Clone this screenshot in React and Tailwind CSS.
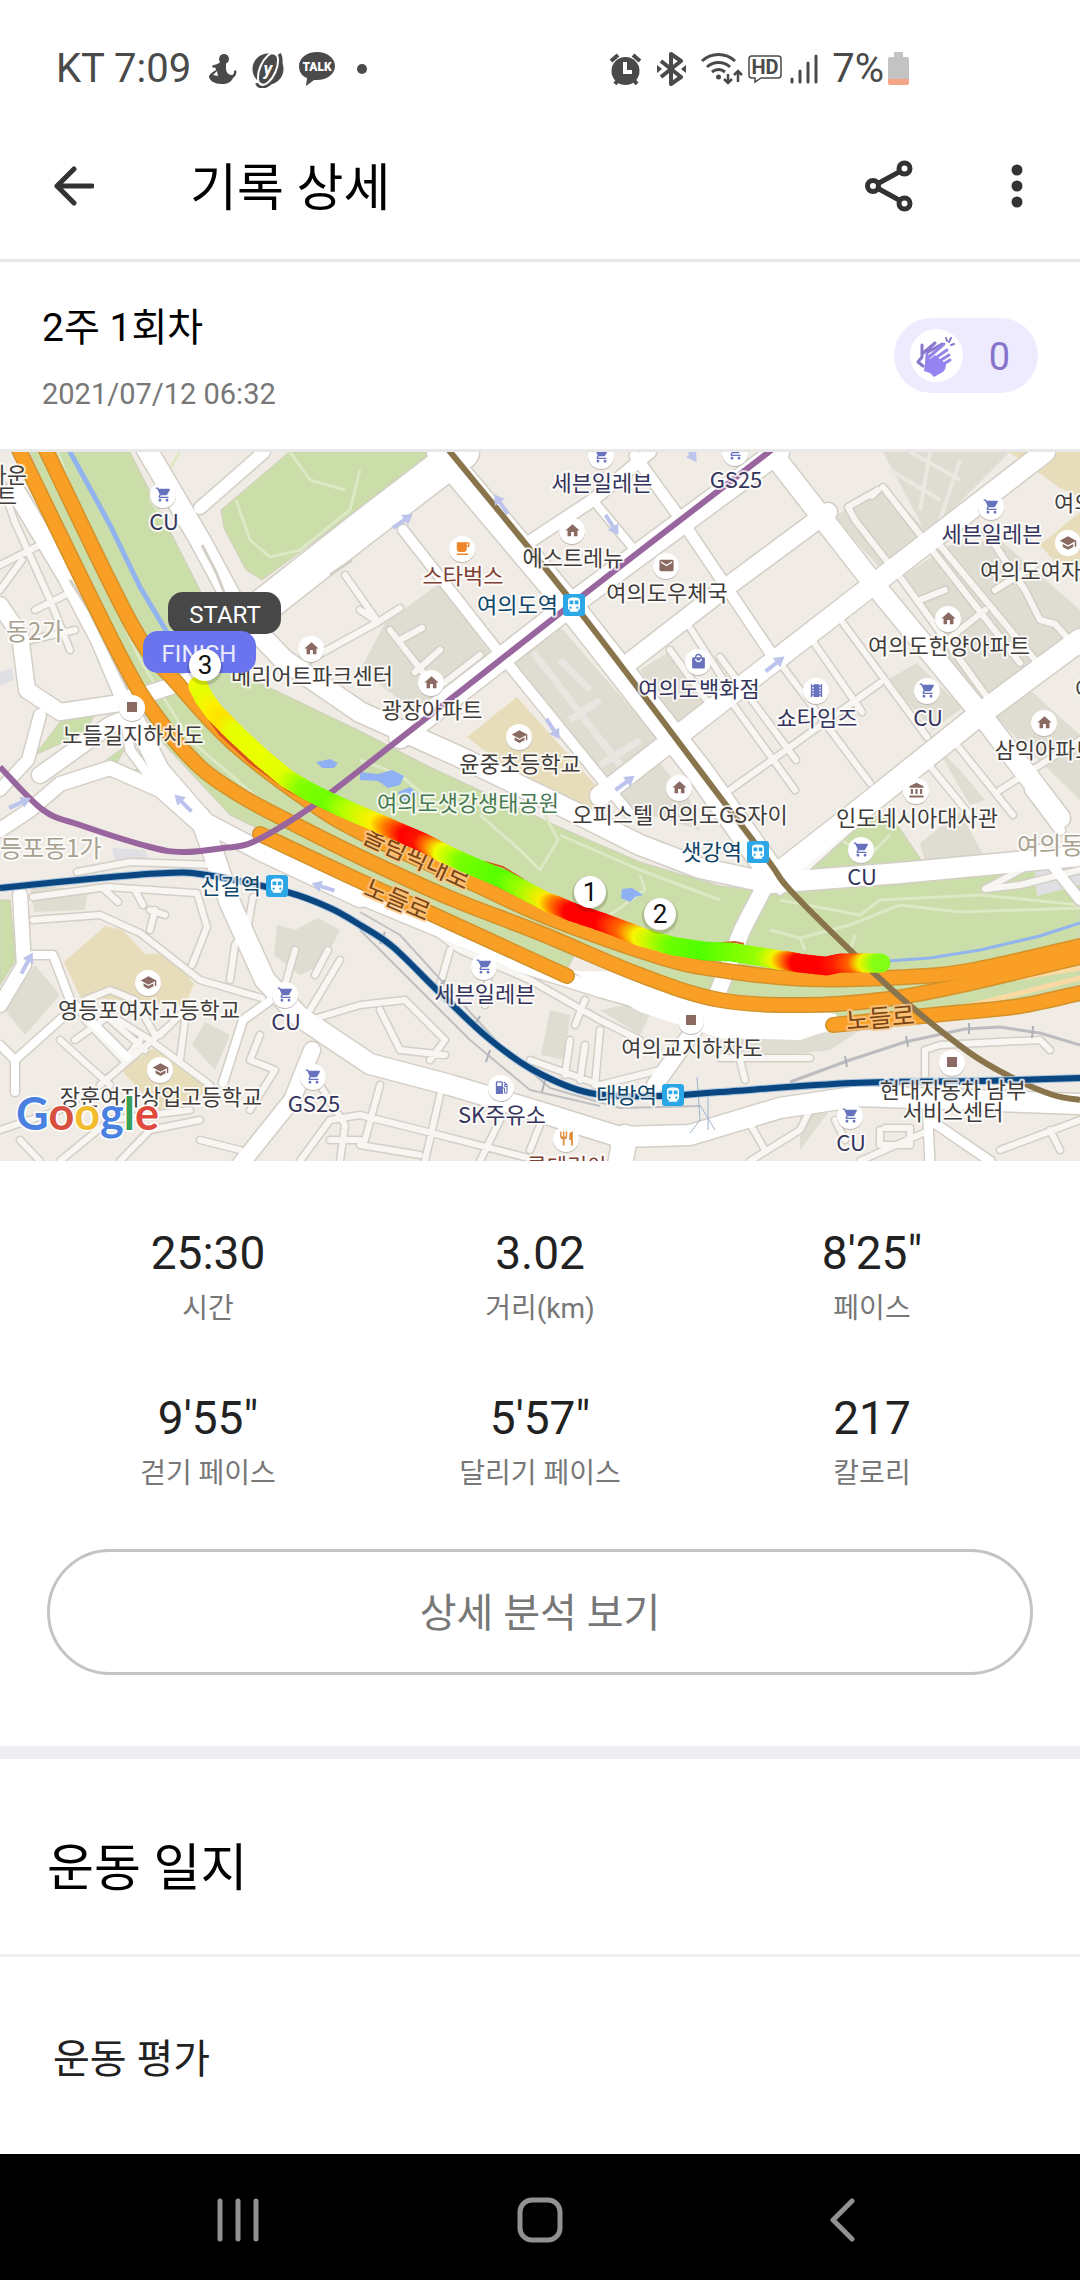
import {
  MdAccountBalance,
  MdDirectionsTransit,
  MdEmail,
  MdHome,
  MdLocalCafe,
  MdLocalGasStation,
  MdLocalMall,
  MdRestaurant,
  MdSchool,
  MdShoppingCart,
  MdTheaters,
} from "react-icons/md";

const stats = [
  { value: "25:30", label: "시간" },
  { value: "3.02", label: "거리(km)" },
  { value: "8'25\"", label: "페이스" },
  { value: "9'55\"", label: "걷기 페이스" },
  { value: "5'57\"", label: "달리기 페이스" },
  { value: "217", label: "칼로리" },
];

// ---- map data, all in map units ----

const parks = [
  "M30 452 130 452 200 590 222 650 262 684 360 731 430 767 557 826 640 862 720 886 780 893 950 879 1080 858 1080 985 960 1012 800 1018 720 996 640 972 578 948 566 972 360 878 230 815 160 740 100 640Z",
  "M221 510 289 452 433 452 360 508 262 580 246 570 224 528Z",
  "M795 872 858 820 890 814 922 861 850 866Z",
  "M35 755 60 722 97 711 84 733Z",
  "M95 768 127 745 112 772Z",
  "M127 773 143 767 162 800Z",
  "M0 900 10 900 16 960 0 985Z",
];

const blocks = [
  "M385 623 440 583 493 657 423 717 360 670Z",
  "M557 623 663 745 607 787 510 667Z",
  "M640 670 667 653 710 710 676 737 666 710Z",
  "M655 757 690 800 700 830 640 812 612 796Z",
  "M883 452 1010 452 927 535Z",
  "M833 517 885 487 935 540 885 573Z",
  "M904 575 950 545 1000 540 1080 610 1080 632 1020 675 985 715 960 680Z",
  "M887 680 917 663 962 708 933 730Z",
  "M990 712 1030 690 1080 735 1080 800Z",
  "M920 843 960 812 985 858 925 862Z",
  "M935 745 960 770 985 800 970 805Z",
  "M277 925 295 930 318 918 340 930 322 965 300 975 274 955Z",
  "M550 1010 570 1015 565 1060 541 1055Z",
  "M600 1010 625 1005 650 1015 640 1035Z",
  "M192 1045 205 1022 230 1035 215 1070Z",
  "M30 885 88 890 85 910 34 912Z",
  "M720 1040 860 1030 830 1050 720 1062Z",
  "M5 1010 35 965 60 995 25 1035Z",
  "M800 1150 830 1110 800 1110Z",
];

const schools = [
  "M467 737 517 697 597 787 590 825 560 810Z",
  "M1009 452 1080 452 1080 497 1060 488Z",
  "M1040 545 1080 512 1080 565 1055 562Z",
  "M64 962 105 926 123 930 145 954 170 954 194 984 185 1005 80 997Z",
  "M121 1070 155 1047 213 1088 165 1117Z",
  "M455 933 475 940 465 953 452 946Z",
];

const minorRoads = [
  "M783 667 870 783",
  "M843 623 927 737",
  "M812 640 862 712",
  "M900 577 987 697",
  "M883 487 1020 663",
  "M933 537 1045 672",
  "M985 530 1025 590 1040 620 1055 624 1080 652",
  "M720 657 796 760",
  "M720 797 880 683",
  "M730 700 795 790",
  "M920 600 945 590M935 650 985 610",
  "M878 490 848 507 855 520 890 565",
  "M878 490 872 496",
  "M953 740 1013 815",
  "M925 760 970 815",
  "M1000 790 1080 740",
  "M995 590 1035 565",
  "M685 620 730 690 690 720",
  "M670 650 710 705",
  "M345 575 378 622 300 665",
  "M360 610 378 622 400 608",
  "M390 630 425 675",
  "M422 628 400 640M440 650 415 672M480 655 435 690",
  "M0 565 40 545M14 520 50 600 70 650M0 480 16 525M35 610 65 595M30 640 75 630M0 590 22 560",
  "M33 920 100 915 140 933 200 980 262 998",
  "M77 872 130 862 215 865",
  "M33 897 107 887 195 893",
  "M105 890 118 902M135 890 143 905",
  "M197 893 207 927 192 965",
  "M253 897 248 925 235 945 230 980",
  "M155 910 150 930M150 910 165 915",
  "M85 1000 110 990 135 1000 155 1035",
  "M75 1040 110 1015 150 1040 210 1085",
  "M60 1040 110 1085M85 1020 125 1062M105 1015 145 1050M100 1085 170 1025M125 1060 140 1040",
  "M185 1020 180 1060M160 1035 190 1005",
  "M260 1035 250 1060 275 1070 250 1110",
  "M295 950 285 985M340 960 325 985 310 1010",
  "M328 950 315 975",
  "M310 1020 360 1005",
  "M0 1130 60 1110 90 1090M60 1161 110 1120 190 1110",
  "M120 1161 150 1130 200 1120M20 1140 40 1161",
  "M200 1140 240 1150M300 1161 330 1120 360 1115",
  "M320 1085 345 1125 340 1161M330 1140 360 1140",
  "M360 1005 405 1000 445 1040 430 1060",
  "M380 1010 400 1050 445 1055",
  "M400 905 460 950 530 980 600 1020 640 1040",
  "M450 950 440 985M490 965 485 1005M585 1000 575 1025",
  "M360 1115 420 1130 540 1161M380 1085 365 1140M440 1095 425 1161M500 1120 480 1161M360 1145 420 1155M540 1125 530 1150",
  "M570 1040 565 1075M585 1045 580 1080M600 1030 595 1085M530 1060 600 1085 660 1070",
  "M740 1060 745 1080M720 1058 810 1058",
  "M925 1075 925 1050 940 1045 1040 1040 1050 1050",
  "M745 1115 765 1150M810 1110 800 1130 750 1161",
  "M835 1120 845 1140M880 1130 880 1145 910 1145 910 1128 885 1128",
  "M1000 1150 1080 1120M860 1161 930 1130M1060 1150 1050 1130",
  "M780 892 860 820",
  "M985 889 1020 885 1080 870M985 889 1030 865",
];

const mainRoads = [
  { d: "M0 605 20 635 27 690 60 712 120 703 190 680", w: 16 },
  { d: "M15 490 67 577 100 640 128 706 160 770 205 822 262 852 360 898", w: 18 },
  { d: "M40 775 110 725 135 715", w: 16 },
  { d: "M0 830 30 810 60 784 110 768 160 790 205 830", w: 14 },
  { d: "M125 715 130 750 160 790", w: 9 },
  { d: "M40 715 28 760 0 790", w: 12 },
  { d: "M350 893 440 930 520 965 600 990 700 1018 830 1020", w: 14 },
  { d: "M200 508 264 452", w: 12 },
  { d: "M262 607 360 530 462 452", w: 34 },
  { d: "M403 530 505 660 628 812", w: 10 },
  { d: "M440 452 573 610 700 772 768 868", w: 26 },
  { d: "M778 452 573 603 400 737", w: 22 },
  { d: "M520 548 593 500 650 452", w: 12 },
  { d: "M593 500 637 553", w: 8 },
  { d: "M635 456 680 518 770 652", w: 11 },
  { d: "M622 668 720 592 828 512", w: 18 },
  { d: "M600 796 720 703 870 587 1045 452", w: 20 },
  { d: "M768 448 873 583 980 713 1060 818", w: 20 },
  { d: "M770 880 860 810 975 718 1080 640", w: 22 },
  { d: "M1030 790 1060 830M1040 850 1080 900", w: 10 },
  { d: "M146 448 200 540 240 614 284 660 360 712 460 757 560 805 640 845 700 868 770 883 900 873 1080 856", w: 20 },
  { d: "M768 880 742 930 715 1000 655 1085", w: 16 },
  { d: "M200 817 214 855 230 903 265 980 300 1017 370 1064 450 1085 540 1112 620 1137 690 1135 780 1108 860 1096 1080 1104", w: 20 },
  { d: "M20 895 24 965 0 1005", w: 14 },
  { d: "M33 955 53 955 70 1000 127 1057", w: 8 },
  { d: "M0 1045 15 1060 62 1018M15 1060 15 1092", w: 8 },
  { d: "M268 1002 243 1020 223 1083", w: 8 },
  { d: "M312 1050 292 1100 240 1165", w: 16 },
  { d: "M620 1165 625 1137", w: 24 },
  { d: "M927 1100 930 1165M930 1120 990 1161", w: 9 },
];

const parkPaths = [
  "M58 452 95 560 140 660 190 740 260 800",
  "M180 452 150 500 165 520",
  "M236 500 250 540 270 557 300 550 350 510 360 470M290 452 310 480 345 490",
  "M480 815 520 850 540 870 558 840 545 815",
  "M360 760 400 775 430 800",
  "M560 835 640 870 720 900M640 875 645 890 610 915",
  "M780 900 860 915 880 900 980 895 1080 905",
  "M770 930 800 938 850 925 900 905 960 912 1080 908",
  "M800 938 805 950M855 935 850 950",
  "M810 850 840 840 870 855 890 835",
];

// turns a list of points into a curve that runs through all of them
function smooth(list) {
  const n = list.split(" ").map(Number);
  const pts = [];
  for (let i = 0; i < n.length; i += 2) pts.push([n[i], n[i + 1]]);
  let d = `M${pts[0].join(" ")}`;
  for (let i = 0; i < pts.length - 1; i++) {
    const a = pts[i - 1] || pts[i];
    const b = pts[i];
    const c = pts[i + 1];
    const e = pts[i + 2] || c;
    d += `C${b[0] + (c[0] - a[0]) / 6} ${b[1] + (c[1] - a[1]) / 6} ${c[0] - (e[0] - b[0]) / 6} ${c[1] - (e[1] - b[1]) / 6} ${c[0]} ${c[1]}`;
  }
  return d;
}

const highways = [
  "18 448 117 650 157 717 200 767 243 797 290 822 360 857 450 898 540 933 640 975 720 1000 803 1005 880 1000 953 987 1080 957",
  "45 448 133 627 177 683 233 743 307 800 360 832 470 882 547 917 660 957 720 970 807 979 907 977 973 970 1080 946",
  "260 834 360 881 567 976",
  "833 1025 953 1013 1020 1006 1080 993",
].map(smooth);

const blueLine = smooth(
  "0 888 100 878 167 873 207 875 287 892 330 908 360 925 393 947 437 990 487 1037 533 1070 590 1093 660 1096 720 1092 853 1083 980 1081 1080 1078"
);
const purpleLine = smooth(
  "774 448 573 603 360 770 307 810 253 842 223 848 183 852 150 847 80 825 43 810 0 767"
);
const brownLine = smooth(
  "447 448 573 603 720 797 770 863 790 890 853 953 907 1003 970 1053 1013 1078 1053 1095 1080 1100"
);

const arrows = [
  [403, 521, -35],
  [501, 504, -125],
  [612, 525, 57],
  [553, 729, 57],
  [625, 783, -37],
  [775, 664, -38],
  [183, 803, -135],
  [20, 803, -25],
  [323, 887, -162],
  [27, 963, -62],
  [690, 452, 57],
];

// x, y and pace color of each point of the run
const track = [
  [197, 684, 245, 255, 0],
  [204, 698, 225, 255, 0],
  [214, 712, 255, 240, 0],
  [224, 722, 255, 225, 0],
  [236, 734, 230, 255, 0],
  [262, 758, 235, 255, 0],
  [286, 778, 225, 255, 0],
  [306, 790, 130, 255, 0],
  [330, 802, 110, 255, 0],
  [352, 812, 190, 255, 0],
  [378, 823, 255, 240, 0],
  [392, 829, 255, 120, 0],
  [408, 836, 255, 0, 0],
  [422, 842, 255, 20, 0],
  [432, 847, 255, 120, 0],
  [443, 853, 240, 255, 0],
  [465, 863, 120, 255, 0],
  [503, 879, 85, 255, 0],
  [522, 889, 150, 255, 0],
  [547, 902, 255, 235, 0],
  [558, 906, 255, 120, 0],
  [572, 912, 255, 0, 0],
  [602, 922, 255, 0, 0],
  [626, 931, 255, 110, 0],
  [641, 937, 245, 245, 0],
  [673, 946, 110, 255, 0],
  [705, 951, 80, 255, 0],
  [730, 952, 110, 255, 0],
  [763, 957, 150, 255, 0],
  [779, 960, 245, 245, 0],
  [789, 961, 255, 120, 0],
  [799, 963, 255, 0, 0],
  [826, 966, 255, 0, 0],
  [840, 963, 255, 30, 0],
  [856, 963, 255, 100, 0],
  [867, 963, 240, 245, 0],
  [881, 963, 130, 255, 20],
];

const trackDots = track.slice(1).flatMap(([x, y, r, g, b], i) => {
  const p = track[i];
  const steps = 8;
  return Array.from({ length: steps }, (_, s) => {
    const t = (s + 1) / steps;
    const mix = (from, to) => Math.round(from + (to - from) * t);
    return {
      x: p[0] + (x - p[0]) * t,
      y: p[1] + (y - p[1]) * t,
      color: `rgb(${mix(p[2], r)},${mix(p[3], g)},${mix(p[4], b)})`,
    };
  });
});

const NAVY = "#34345c";
const INK = "#3f3c3a";
const BROWN = "#8a6a62";
const INDIGO = "#6672bd";

const places = [
  { x: 164, y: 530, text: "CU", icon: MdShoppingCart, color: NAVY, tint: INDIGO },
  { x: 602, y: 491, text: "세븐일레븐", icon: MdShoppingCart, color: NAVY, tint: INDIGO },
  { x: 736, y: 488, text: "GS25", icon: MdShoppingCart, color: NAVY, tint: INDIGO },
  { x: 573, y: 566, text: "에스트레뉴", icon: MdHome, color: INK, tint: BROWN },
  { x: 463, y: 584, text: "스타벅스", icon: MdLocalCafe, color: "#7c4034", tint: "#ee8427" },
  { x: 667, y: 601, text: "여의도우체국", icon: MdEmail, color: INK, tint: BROWN },
  { x: 312, y: 684, text: "메리어트파크센터", icon: MdHome, color: INK, tint: BROWN },
  { x: 432, y: 718, text: "광장아파트", icon: MdHome, color: INK, tint: BROWN },
  { x: 520, y: 772, text: "윤중초등학교", icon: MdSchool, color: INK, tint: BROWN },
  { x: 680, y: 823, text: "오피스텔 여의도GS자이", icon: MdHome, color: INK, tint: BROWN },
  { x: 699, y: 697, text: "여의도백화점", icon: MdLocalMall, color: NAVY, tint: INDIGO },
  { x: 992, y: 542, text: "세븐일레븐", icon: MdShoppingCart, color: NAVY, tint: INDIGO },
  { x: 949, y: 654, text: "여의도한양아파트", icon: MdHome, color: INK, tint: BROWN },
  { x: 817, y: 726, text: "쇼타임즈", icon: MdTheaters, color: NAVY, tint: INDIGO },
  { x: 928, y: 726, text: "CU", icon: MdShoppingCart, color: NAVY, tint: INDIGO },
  { x: 1045, y: 758, text: "삼익아파트", icon: MdHome, color: INK, tint: BROWN },
  { x: 917, y: 826, text: "인도네시아대사관", icon: MdAccountBalance, color: INK, tint: BROWN },
  { x: 862, y: 885, text: "CU", icon: MdShoppingCart, color: NAVY, tint: INDIGO },
  { x: 133, y: 743, text: "노들길지하차도", color: INK, tint: BROWN },
  { x: 149, y: 1018, text: "영등포여자고등학교", icon: MdSchool, color: INK, tint: BROWN },
  { x: 286, y: 1030, text: "CU", icon: MdShoppingCart, color: NAVY, tint: INDIGO },
  { x: 161, y: 1105, text: "장훈여자상업고등학교", icon: MdSchool, color: INK, tint: BROWN },
  { x: 314, y: 1112, text: "GS25", icon: MdShoppingCart, color: NAVY, tint: INDIGO },
  { x: 485, y: 1002, text: "세븐일레븐", icon: MdShoppingCart, color: NAVY, tint: INDIGO },
  { x: 502, y: 1123, text: "SK주유소", icon: MdLocalGasStation, color: NAVY, tint: INDIGO },
  { x: 692, y: 1056, text: "여의교지하차도", color: INK, tint: BROWN },
  { x: 953, y: 1098, text: "현대자동차 남부", color: INK, tint: BROWN },
  { x: 851, y: 1151, text: "CU", icon: MdShoppingCart, color: NAVY, tint: INDIGO },
  { x: 567, y: 1174, text: "롯데리아", icon: MdRestaurant, color: "#7c4034", tint: "#e08a3c" },
];

const stations = [
  { x: 574, y: 605, label: "여의도역" },
  { x: 758, y: 852, label: "샛강역" },
  { x: 277, y: 886, label: "신길역" },
  { x: 673, y: 1095, label: "대방역" },
];

const mapFont = "font-['Noto_Sans_CJK_KR',sans-serif]";

function Label({ halo = "#fff", ...props }) {
  return (
    <text
      fontSize="22"
      textAnchor="middle"
      stroke={halo}
      strokeOpacity="0.8"
      strokeWidth="4"
      strokeLinejoin="round"
      paintOrder="stroke"
      {...props}
    />
  );
}

function RoadName(props) {
  return <Label fontSize="25" fill="#7a4614" halo="#fdc98a" {...props} />;
}

function District(props) {
  return <Label fontSize="24" textAnchor="start" fill="#a8a190" {...props} />;
}

function Place({ x, y, text, icon: Icon, color, tint }) {
  return (
    <g>
      <circle cx={x - 1} cy={y - 34} r="13" fill="#bdb8b0" />
      <circle cx={x - 1} cy={y - 35} r="13" fill="#fff" />
      {Icon ? (
        <Icon x={x - 9} y={y - 44} size={17} color={tint} />
      ) : (
        <rect x={x - 6} y={y - 41} width="10" height="10" fill={tint} />
      )}
      <Label x={x} y={y} fill={color}>
        {text}
      </Label>
    </g>
  );
}

function KmMarker({ x, y, children }) {
  return (
    <g>
      <circle cx={x} cy={y + 2} r="18" fill="#000" opacity="0.15" />
      <circle cx={x} cy={y} r="16" fill="#fff" />
      <text x={x} y={y + 9} fontSize="26" textAnchor="middle" fill="#111">
        {children}
      </text>
    </g>
  );
}

function RouteMap() {
  return (
    <svg
      viewBox="0 452 1080 709"
      className="block w-full"
      role="img"
      aria-label="달리기 경로 지도"
      fill="none"
      strokeLinejoin="round"
    >
      <rect y="452" width="1080" height="709" fill="#f0ece5" />
      {blocks.map((d) => (
        <path key={d} d={d} fill="#dfdcd2" />
      ))}
      {schools.map((d) => (
        <path key={d} d={d} fill="#e8ddbb" />
      ))}
      {parks.map((d) => (
        <path key={d} d={d} fill="#cbdda9" stroke="#d0cec0" />
      ))}
      {parkPaths.map((d) => (
        <path key={d} d={d} stroke="#dde8c5" strokeWidth="3" />
      ))}

      <path d="M510 667 600 780M533 652 620 765M590 690 560 660M640 740 600 765M570 720 600 700" stroke="#e8e6e0" strokeWidth="7" />
      <path d="M890 470 940 500M910 452 960 480M930 452 920 510M960 460 940 520" stroke="#ebe8e2" strokeWidth="4" />
      <path d="M112 848 145 850 150 862 115 860ZM1035 872 1080 862 1080 885 1037 896ZM0 672 12 668 14 680 0 686Z" fill="#e0dfe3" />

      {/* casings first so that crossings stay open */}
      <path d={minorRoads.join("")} stroke="#d3cfc6" strokeWidth="9" strokeLinecap="round" />
      {mainRoads.map(({ d, w }) => (
        <path key={d} d={d} stroke="#d3cfc6" strokeWidth={w + 3} strokeLinecap="round" />
      ))}
      <path d={minorRoads.join("")} stroke="#f8f6f2" strokeWidth="6" strokeLinecap="round" />
      {mainRoads.map(({ d, w }) => (
        <path key={d} d={d} stroke="#fff" strokeWidth={w} strokeLinecap="round" />
      ))}
      <path d="M572 971 640 972 720 1002 836 1014 842 1026 800 1040 720 1038 640 1012Z" fill="#fff" />
      <path d="M202 545 216 572 224 592M70 580 90 612 128 690M330 575 352 560" stroke="#d3cfc6" strokeWidth="3" />

      {/* river and ponds */}
      <path d="M69 450 110 525 140 587 168 634" stroke="#92b4ee" strokeWidth="5" />
      <path d="M888 961 930 958 980 950 1040 936 1080 923" stroke="#92b4ee" strokeWidth="3" />
      <path d="M316 762 330 759 338 763 334 768 322 768Z" fill="#8fb1f4" />
      <path d="M360 772 378 774 392 770 404 776 400 785 388 788 378 781 360 780Z" fill="#8fb1f4" />
      <path d="M398 792 410 787 418 794 404 802Z" fill="#8fb1f4" />
      <path d="M622 889 632 888 643 895 635 897 630 902 621 898Z" fill="#8fb1f4" />

      <path d="M1000 981 1080 968M960 1008 1080 978" stroke="#fbd9a5" strokeWidth="5" />
      {highways.map((d) => (
        <path key={d} d={d} stroke="#d3922a" strokeWidth="16" strokeLinecap="round" />
      ))}
      {highways.map((d) => (
        <path key={d} d={d} stroke="#fa9f26" strokeWidth="13" strokeLinecap="round" />
      ))}

      {/* rails and subway lines */}
      <path d="M360 912 400 935 450 990 500 1045 550 1088 620 1108 700 1106" stroke="#bfc0c2" strokeWidth="2" />
      <path d="M360 930 420 990 470 1040 530 1090 600 1106" stroke="#bfc0c2" strokeWidth="2" />
      <path d="M790 1082 850 1060 905 1042 965 1029 1000 1027 1040 1033 1080 1045" stroke="#bcbcbe" strokeWidth="3" />
      <path d="M845 1056 847 1067M906 1036 908 1047M969 1023 969 1034M1033 1026 1032 1038M445 980 435 990M385 932 380 944M480 1016 474 1026M490 1050 486 1062M545 1080 542 1092" stroke="#aeb2b8" strokeWidth="2" />
      <path d="M697 1077 700 1120 690 1133M708 1095 708 1130M715 1130 700 1105" stroke="#9db3cf" />
      <path d={brownLine} stroke="#8a744b" strokeWidth="6" />
      <path d={purpleLine} stroke="#99659f" strokeWidth="6" />
      <path d={blueLine} stroke="#a9c3dd" strokeWidth="8" />
      <path d={blueLine} stroke="#0a4680" strokeWidth="6" />

      {arrows.map(([x, y, deg]) => (
        <path
          key={`${x}-${y}`}
          d="M-12 -2H2V-6L12 0 2 6V2H-12Z"
          fill="#bcc3ec"
          transform={`translate(${x} ${y}) rotate(${deg})`}
        />
      ))}

      <g className={mapFont}>
        <RoadName transform="translate(413 866) rotate(25)">올림픽대로</RoadName>
        <RoadName transform="translate(394 908) rotate(23)">노들로</RoadName>
        <RoadName transform="translate(881 1027) rotate(-5)">노들로</RoadName>
        <Label x="27" y="483" textAnchor="end" fill={INK}>타운</Label>
        <Label x="17" y="504" textAnchor="end" fill={INK}>트</Label>
        <District x="6" y="640">동2가</District>
        <District x="0" y="857">등포동1가</District>
        <District x="1017" y="854">여의동</District>
        <Label x="468" y="811" fill="#47794f">여의도샛강생태공원</Label>
        {places.map((place) => (
          <Place key={`${place.x}-${place.y}`} {...place} />
        ))}
        <Label x="953" y="1120" fill={INK}>서비스센터</Label>
        <Label x="1054" y="511" textAnchor="start" fill={INK}>여의도</Label>
        <Label x="1075" y="697" textAnchor="start" fill={INK}>여</Label>
        <Label x="980" y="579" textAnchor="start" fill={INK}>여의도여자고</Label>
        <circle cx="1068" cy="543" r="13" fill="#fff" />
        <MdSchool x={1059} y={534} size={18} color={BROWN} />
        {stations.map(({ x, y, label }) => (
          <g key={label}>
            <Label x={x - 16} y={y + 8} textAnchor="end" fill="#0d4468">
              {label}
            </Label>
            <rect x={x - 11} y={y - 11} width="22" height="22" rx="3" fill="#2ba6e6" />
            <MdDirectionsTransit x={x - 9} y={y - 9} size={18} color="#fff" />
          </g>
        ))}
      </g>

      <path d="M191 688 200 706 220 734 250 762 290 791 330 811" stroke="#d9531e" strokeWidth="3" />
      <path d="M485 862 503 867 524 880M722 943 735 942 744 944" stroke="#c8641e" strokeWidth="2" />
      {trackDots.map((dot) => (
        <circle key={`${dot.x}-${dot.y}`} cx={dot.x} cy={dot.y} r="9.500" fill={dot.color} />
      ))}

      <rect x="168" y="592" width="113" height="42" rx="15" fill="#474747" />
      <text x="225" y="623" fontSize="24" textAnchor="middle" fill="#fff">START</text>
      <rect x="143" y="631" width="113" height="42" rx="15" fill="#6b74ef" />
      <text x="199" y="662" fontSize="24" textAnchor="middle" fill="#e9eafc">FINISH</text>
      <KmMarker x={205} y={665}>3</KmMarker>
      <KmMarker x={590} y={892}>1</KmMarker>
      <KmMarker x={660} y={914}>2</KmMarker>

      <text
        x="16"
        y="1130"
        fontSize="45"
        stroke="#fff"
        strokeWidth="3"
        paintOrder="stroke"
        className="font-[Lato,sans-serif] font-bold"
      >
        <tspan fill="#4a80e0">G</tspan>
        <tspan fill="#d8503f">o</tspan>
        <tspan fill="#f3bc2e">o</tspan>
        <tspan fill="#4a80e0">g</tspan>
        <tspan fill="#38a055">l</tspan>
        <tspan fill="#e04a3c">e</tspan>
      </text>
    </svg>
  );
}

function StatusBar() {
  return (
    <div className="flex h-28 items-center pt-[26px] pr-[171px] pl-14 text-[40px] text-[#4a4a4a]">
      <span className="mr-[18px]">KT 7:09</span>
      <div className="flex items-center gap-[15px]">
        <svg width="28" height="32" viewBox="0 0 28 32" fill="currentColor">
          <circle cx="15" cy="6" r="5" />
          <path d="M11 9c-2 3-6 2-8 4l1 2c2-1 3 0 3 2-3 2-7 4-7 7 1 4 6 7 12 7 7 0 10-2 12-6 3-2 4-5 3-8l-2 1c0 2 0 4-3 4-4-1-5-4-5-7v-6zM8 18l1 5-5-1z" fillRule="evenodd" />
        </svg>
        <svg width="32" height="38" viewBox="0 0 32 38" fill="none">
          <circle cx="16" cy="19" r="15.500" fill="currentColor" />
          <path d="M27 4C31 10 27 24 20 31 14 38 7 38 5 33" stroke="currentColor" strokeWidth="4" />
          <ellipse cx="16" cy="19" rx="8" ry="17" stroke="#fff" strokeWidth="2" transform="rotate(24 16 19)" />
          <text x="16" y="25" fontSize="18" textAnchor="middle" fill="#fff" className="font-bold italic">y</text>
        </svg>
        <svg width="36" height="34" viewBox="0 0 36 34">
          <path d="M18 0C8 0 0 6 0 14c0 6 3 10 8 12l-1 8 8-6h3c10 0 18-6 18-14S28 0 18 0Z" fill="currentColor" />
          <text x="18" y="19" fontSize="12" textAnchor="middle" fill="#fff" className="font-black">TALK</text>
        </svg>
      </div>
      <span className="ml-[22px] size-[10px] rounded-full bg-current" />

      <div className="ml-auto flex items-center gap-2">
        <svg width="40" height="34" viewBox="0 0 40 34" fill="none" stroke="currentColor" strokeWidth="4">
          <path d="M2 9 9 3M31 9 24 3M6 32 10 27M28 32 24 27" />
          <circle cx="16.500" cy="19" r="14" fill="currentColor" stroke="none" />
          <path d="M16 10v10h7" stroke="#fff" strokeWidth="4" />
        </svg>
        <svg width="36" height="34" viewBox="0 0 36 34" fill="none" stroke="currentColor" strokeWidth="4">
          <path d="M4 9 24 25 14 32V2L24 9 4 25" strokeLinejoin="round" />
          <path d="M0 13v8l5-4ZM29 13v8l-5-4Z" fill="currentColor" stroke="none" />
        </svg>
        <svg width="39" height="34" viewBox="0 0 39 34" fill="none" stroke="currentColor" strokeWidth="3" overflow="visible">
          <path d="M1 9a24 24 0 0 1 33 0M6 15a17 17 0 0 1 23 0M11 20a10 10 0 0 1 13 0" />
          <circle cx="17.500" cy="25" r="2.500" fill="currentColor" stroke="none" />
          <path d="M27 22v8M23 27l4 4 4-4M37 30v-9M33 23l4-4 4 4" strokeWidth="2.500" />
        </svg>
        <svg width="34" height="30" viewBox="0 0 34 30" fill="none" stroke="currentColor" strokeWidth="1.500">
          <path d="M4 2h26q3 0 3 3v16q0 3-3 3H13l-6 4v-4H4q-3 0-3-3V5q0-3 3-3Z" />
          <text x="17" y="20" fontSize="20" textAnchor="middle" fill="currentColor" stroke="none" className="font-bold">HD</text>
        </svg>
        <svg width="34" height="30" viewBox="0 0 34 30" stroke="currentColor" strokeWidth="3" strokeLinecap="round">
          <path d="M2 25v3M10 17v11M18 9v19M26 2v26" />
        </svg>
        <div className="flex items-center gap-1">
          <span>7%</span>
          <svg width="21" height="34" viewBox="0 0 21 34">
            <path d="M6 0h9v5h4q2 0 2 2v20H0V7q0-2 2-2h4Z" fill="#c3c3c3" />
            <path d="M0 27h21v4q0 2-2 2H2q-2 0-2-2Z" fill="#f6a488" />
          </svg>
        </div>
      </div>
    </div>
  );
}

function ClapIcon() {
  return (
    <svg width="40" height="42" viewBox="0 0 40 42" fill="none" strokeLinecap="round" strokeLinejoin="round">
      {/* hand behind */}
      <path d="M6 10V22L2 27 7 31M6 19 19 8M19 8 11 15M12 17 26 9" stroke="#8877cc" strokeWidth="3" />
      {/* hand in front */}
      <path d="M13 22 28 9M18 24 31 15M22 27 33 20M26 30 34 25M11 31V19" stroke="#9583e8" strokeWidth="3" />
      <path d="M10 20 14 24 19 20 30 29Q30 36 25 38L18 42 14 38 8 36Z" fill="#9583f0" />
      <path d="M30 3 31 6M35 3 33 7M38 9 35 10" stroke="#8877cc" strokeWidth="2" />
    </svg>
  );
}

export default function App() {
  return (
    <div className="flex min-h-screen flex-col bg-white font-[Roboto,'Noto_Sans_CJK_KR',sans-serif]">
      <StatusBar />

      <header className="flex h-[150px] items-center border-b-[3px] border-[#e8e8e8] pr-[57px] pl-[54px] text-[#333]">
        <button type="button" aria-label="뒤로">
          <svg width="40" height="40" viewBox="0 0 40 40" fill="none" stroke="currentColor" strokeWidth="5" strokeLinecap="round" strokeLinejoin="round">
            <path d="M20 3 3 20 20 37M3 20H38" />
          </svg>
        </button>
        <h1 className="ml-24 pt-2 text-[51px] text-black">기록 상세</h1>
        <button type="button" aria-label="공유" className="ml-auto">
          <svg width="48" height="52" viewBox="0 0 48 52" fill="none" stroke="currentColor" strokeWidth="5">
            <path d="M14 23 34 12M14 29 34 40" />
            <circle cx="8" cy="26" r="5.500" />
            <circle cx="39.500" cy="8.500" r="5.500" />
            <circle cx="39.500" cy="43.500" r="5.500" />
          </svg>
        </button>
        <button type="button" aria-label="더보기" className="ml-[98px]">
          <svg width="12" height="44" viewBox="0 0 12 44" fill="currentColor">
            <circle cx="6" cy="6" r="5.500" />
            <circle cx="6" cy="22" r="5.500" />
            <circle cx="6" cy="38" r="5.500" />
          </svg>
        </button>
      </header>

      <main>
        <section className="flex h-[190px] items-center justify-between border-b-[3px] border-[#e8e8e8] px-[42px]">
          <div className="flex flex-col gap-5">
            <h2 className="text-[39px] leading-[56px] text-black">2주 1회차</h2>
            <p className="text-[29px] leading-9 text-[#777]">2021/07/12 06:32</p>
          </div>
          <button
            type="button"
            className="flex h-[75px] items-center gap-[26px] rounded-full bg-[#edebfd] pr-7 pl-4 text-[38px] text-[#8674cc]"
          >
            <span className="flex size-[53px] items-center justify-center rounded-full bg-white">
              <ClapIcon />
            </span>
            <span className="pt-1">0</span>
          </button>
        </section>

        <RouteMap />

        <section className="px-[47px] pt-16 pb-[71px]">
          <dl className="-mx-[5px] grid grid-cols-3 gap-y-[61px] text-center">
            {stats.map(({ value, label }) => (
              <div key={label} className="flex flex-col-reverse gap-2">
                <dt className="text-[28px] leading-10 text-[#777]">{label}</dt>
                <dd className="text-[46px] leading-14 text-[#222]">{value}</dd>
              </div>
            ))}
          </dl>
          <button
            type="button"
            className="mt-[55px] h-[126px] w-full rounded-full border-[3px] border-[#c4c4c4] pt-1 text-[40px] text-[#777]"
          >
            상세 분석 보기
          </button>
        </section>

        <section className="border-t-[13px] border-[#edeff2]">
          <h2 className="flex h-[198px] items-center border-b-[3px] border-[#eff0f4] px-[47px] pt-[26px] text-[51px] text-black">
            운동 일지
          </h2>
          <h3 className="flex h-[197px] items-center px-[53px] pt-2 text-[40px] text-[#222]">운동 평가</h3>
        </section>
      </main>

      <nav className="mt-auto grid h-[126px] grid-cols-3 bg-black px-[87px] pt-1.5 text-[#919191]">
        <button type="button" aria-label="최근 앱" className="flex items-center justify-center">
          <svg width="42" height="44" viewBox="0 0 42 44" stroke="currentColor" strokeWidth="5" strokeLinecap="round">
            <path d="M3 3v38M21 3v38M39 3v38" />
          </svg>
        </button>
        <button type="button" aria-label="홈" className="flex items-center justify-center">
          <svg width="46" height="46" viewBox="0 0 46 46" fill="none" stroke="currentColor" strokeWidth="5">
            <rect x="3" y="3" width="40" height="40" rx="12" />
          </svg>
        </button>
        <button type="button" aria-label="이전" className="flex items-center justify-center">
          <svg width="26" height="44" viewBox="0 0 26 44" fill="none" stroke="currentColor" strokeWidth="5" strokeLinecap="round" strokeLinejoin="round">
            <path d="M23 3 4 22 23 41" />
          </svg>
        </button>
      </nav>
    </div>
  );
}
